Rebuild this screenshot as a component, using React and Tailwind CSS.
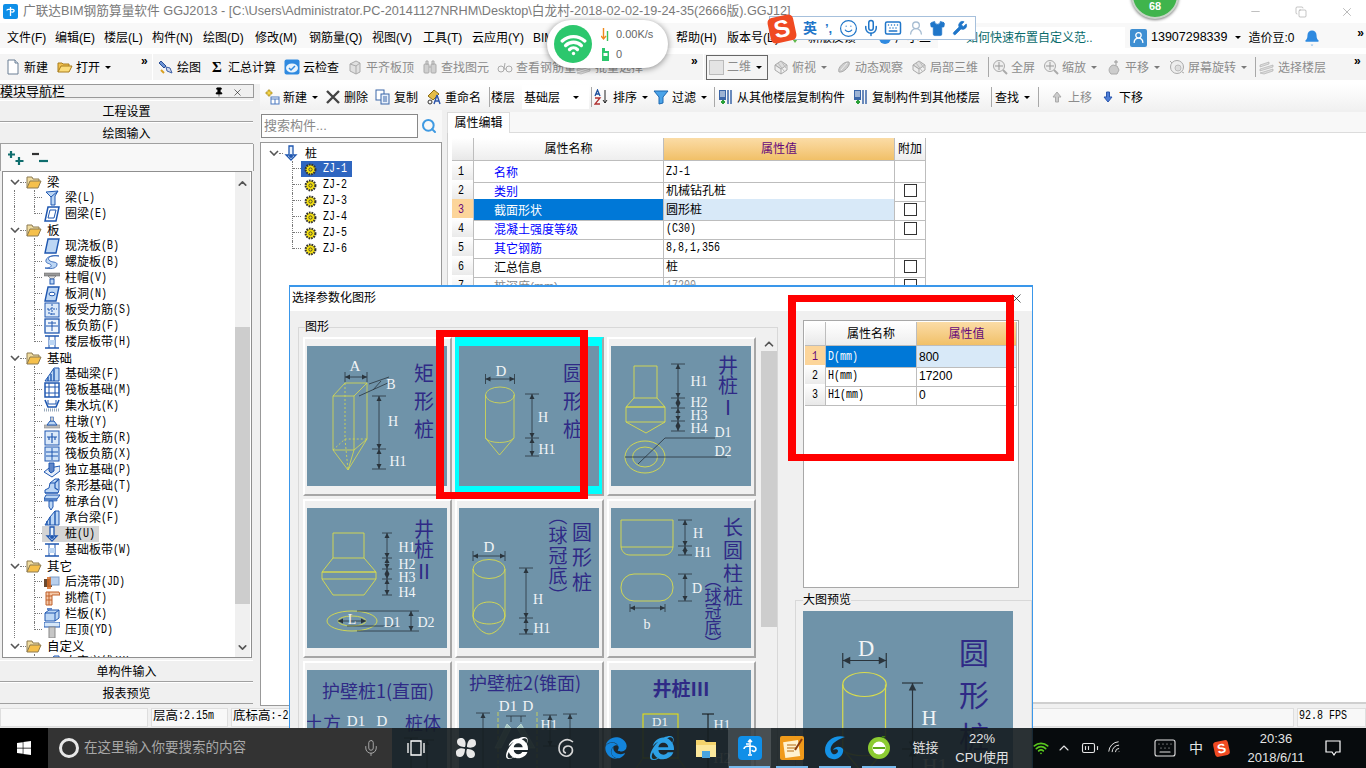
import clsx from "clsx";
import { BatteryMedium, ChevronUp, ChevronDown, Copy, Keyboard, Mic, Minus, Pin, Search, Shirt, Smile, UserRound, Wifi, Wrench, X, Bell } from "lucide-react";
import { FaEdge, FaInternetExplorer, FaWindows } from "react-icons/fa";

const MONO = "font-['Liberation_Mono','Noto_Sans_CJK_SC',monospace]";

// half-width latin next to 12px CJK, the way the app's bitmap font sets it
const Mixed = ({ text }) =>
  String(text).split(/([\x00-\x7f]+)/).map((part, i) =>
    /^[\x00-\x7f]+$/.test(part) ? (
      <span key={i} className="inline-block origin-bottom scale-y-[1.2] whitespace-pre text-[10px] leading-3">{part}</span>
    ) : (
      <span key={i}>{part}</span>
    )
  );

// ---------- small icons ----------
const Svg = ({ s = 16, children, className }) => (
  <svg width={s} height={s} viewBox="0 0 16 16" className={clsx("shrink-0", className)}>{children}</svg>
);

const Caret = () => <span className="ml-[5px] inline-block h-0 w-0 border-x-[3px] border-t-[3px] border-x-transparent border-t-black" />;

const ToolIcons = {
  page: <Svg><path d="M3 1h7l3 3v11H3z" fill="#fff" stroke="#6b7f94" /><path d="M10 1v3h3" fill="#dfe8f2" stroke="#6b7f94" /></Svg>,
  open: <Svg><path d="M1 13V4h4l1 1h6v2" fill="#f2c14e" stroke="#a87c1c" /><path d="M1 13l3-6h11l-3 6z" fill="#fbdc7a" stroke="#a87c1c" /></Svg>,
  brush: <Svg><path d="M3 2l5 5-2 2-5-5z" fill="#6a93d6" stroke="#2b4f96" /><path d="M8 8l4 1 2 5-5-2z" fill="#cfd9ee" stroke="#3b5ea6" /><path d="M3 11l3 3" stroke="#d8a020" strokeWidth="2" /></Svg>,
  sigma: <span className="w-4 text-center font-['Liberation_Serif',serif] text-[15px] font-bold leading-none">Σ</span>,
  cloud: <Svg><rect x="0.5" y="0.5" width="15" height="15" rx="2" fill="#2f8ae0" /><ellipse cx="8" cy="9" rx="6" ry="4.5" fill="#e9f4fd" /><path d="M5 9l2 2 4-4" stroke="#2f8ae0" strokeWidth="1.5" fill="none" /></Svg>,
  gBox: <Svg><path d="M3 5l6-3 4 2v9l-4 2-6-3z" fill="#e0e0e0" stroke="#aaa" /><path d="M9 7v8M3 5l6 2 4-3" stroke="#aaa" fill="none" /></Svg>,
  gBino: <Svg><rect x="2" y="5" width="5" height="9" rx="1" fill="#cfcfcf" stroke="#aaa" /><rect x="9" y="5" width="5" height="9" rx="1" fill="#cfcfcf" stroke="#aaa" /><path d="M4 2h2v3H4zM10 2h2v3h-2zM7 8h2" stroke="#aaa" fill="#ddd" /></Svg>,
  gGlass: <Svg><circle cx="4" cy="10" r="3" fill="none" stroke="#aaa" /><circle cx="12" cy="10" r="3" fill="none" stroke="#aaa" /><path d="M7 10h2M7 10l1-6" stroke="#aaa" /></Svg>,
  gOrbit: <Svg><path d="M3 13C1 9 8 2 13 3c2 3-5 11-10 10z" fill="#ccc" stroke="#aaa" /><path d="M5 11l6-7" stroke="#eee" /></Svg>,
  gCube: <Svg><path d="M2 6l6-4 6 4-6 4z" fill="#ddd" stroke="#aaa" /><path d="M2 6v5l6 4v-5zM14 6v5l-6 4" fill="#eee" stroke="#aaa" /><path d="M5 4l6 8M8 2l5 7" stroke="#bbb" /></Svg>,
  gZoom: <Svg><circle cx="7" cy="7" r="5.5" fill="#eee" stroke="#aaa" /><path d="M7 3v8M3 7h8" stroke="#999" /><path d="M11 11l4 4" stroke="#aaa" strokeWidth="2" /></Svg>,
  gPan: <Svg><path d="M5 15c-3-3-2-6 0-8l2-1 4 1 2 4-2 4z" fill="#ccc" stroke="#aaa" /><path d="M10 1v5M8 3h4" stroke="#999" /></Svg>,
  gTurn: <Svg><circle cx="8" cy="8" r="6.5" fill="#eee" stroke="#aaa" /><circle cx="9" cy="9" r="3" fill="#ddd" stroke="#bbb" /><path d="M3 4l-2-2M13 13l2 1" stroke="#aaa" /></Svg>,
  gLayers: <Svg><path d="M1 6l9-3v2l-9 3zM1 10l13-4v2L1 12zM1 14l13-4v2l-9 3z" fill="#ddd" stroke="#aaa" strokeWidth="0.6" /></Svg>,
  newItem: <Svg><path d="M4 1h2v2h2v2H6v2H4V5H2V3h2z" fill="#f6d64a" stroke="#a78a1c" strokeWidth="0.7" /><rect x="7" y="8" width="8" height="7" fill="#fff" stroke="#4a79c0" /><path d="M7 10h8M11 10v5" stroke="#4a79c0" /></Svg>,
  del: <Svg><path d="M2 2l12 12M14 2L2 14" stroke="#444" strokeWidth="2.4" /></Svg>,
  dup: <Svg><rect x="1" y="1" width="8" height="10" fill="#fff" stroke="#3b66a8" /><rect x="6" y="5" width="8" height="10" fill="#e8f0fb" stroke="#3b66a8" /><path d="M8 8h4M8 10h4M8 12h4" stroke="#3b66a8" /></Svg>,
  rename: <Svg><path d="M2 7l6-6 5 4-6 6z" fill="#e4bd48" stroke="#8a6a10" /><path d="M11 6l-3 9M11 6l3 9M9 12h4" stroke="#2c55a8" strokeWidth="1.4" fill="none" /><circle cx="4" cy="13" r="2" fill="none" stroke="#333" /></Svg>,
  sort: <Svg><path d="M1 7l2.500-6L6 7M2 5h3" stroke="#1c4f9c" strokeWidth="1.3" fill="none" /><path d="M1 9h5l-5 6h5" stroke="#b03030" strokeWidth="1.3" fill="none" /><path d="M11 1v13M9 11l2 3 2-3" stroke="#222" fill="none" /></Svg>,
  filter: <Svg><path d="M1 2h14L10 8v6l-4 1V8z" fill="#4aa3e8" stroke="#1d68b0" /></Svg>,
  copyFrom: <Svg><rect x="1" y="1" width="7" height="10" fill="#3b66a8" /><path d="M2 3h5M2 5h5M2 7h5" stroke="#fff" /><path d="M10 1v14M13 1v14" stroke="#3b66a8" strokeWidth="1.5" /><path d="M3 13h4M5 11v4" stroke="#2aa038" strokeWidth="2" /></Svg>,
  up: <Svg><path d="M8 3l4 5H9.500v5h-3V8H4z" fill="#ccc" stroke="#aaa" /></Svg>,
  down: <Svg><path d="M8 13l4-5H9.500V3h-3v5H4z" fill="#4f7fd8" stroke="#2b57ad" /></Svg>,
};

const Tool = ({ w, icon, label, gray, caret, caretGray }) => (
  <div className={clsx("flex h-full shrink-0 items-center", w, gray ? "text-[#8c8c8c]" : "text-black")}>
    <span className="flex w-[19px] shrink-0 items-center justify-start">{ToolIcons[icon]}</span>
    <span className="whitespace-nowrap pt-px">{label}</span>
    {caret && <span className={clsx("flex items-center", caretGray && "opacity-50")}><Caret /></span>}
  </div>
);

const Sep = ({ w }) => (
  <div className={clsx("flex h-full shrink-0 items-center justify-center", w)}>
    <div className="h-[20px] w-px bg-[#a8a8a8]" />
  </div>
);

const More = () => <span className="self-start pt-[1px] text-[12px] font-bold leading-none text-black">»</span>;

// ---------- tree icons ----------
const B = "#1f57b0";
const L = "#bcd6f4";
const TreeIcons = {
  beam: <Svg><path d="M2 2l12-1-3 5v9H7V7z" fill={L} stroke={B} /><path d="M7 7l7-6" stroke={B} /></Svg>,
  ring: <Svg><path d="M4 1h11l-3 14H1z" fill="#fff" stroke={B} strokeWidth="1.5" /><path d="M6 4h6l-2 8H4z" fill="none" stroke={B} /></Svg>,
  slab: <Svg><path d="M4 1h11l-3 14H1z" fill={L} stroke={B} strokeWidth="1.4" /></Svg>,
  spiral: <Svg><path d="M15 2C8 1 3 3 5 6s9 1 8 5-7 4-12 3c4 0 7-1 6-3S1 10 2 6s8-5 13-4z" fill={L} stroke={B} strokeWidth="0.8" /></Svg>,
  cap: <Svg><rect x="0" y="3" width="16" height="3" fill="#999" stroke="#666" strokeWidth="0.5" /><path d="M4 6h8L9 9H7z" fill="#ddd" stroke="#666" strokeWidth="0.6" /><rect x="6" y="9" width="4" height="5" fill={L} stroke={B} /></Svg>,
  hole: <Svg><path d="M4 1h11l-3 14H1z" fill={L} stroke={B} strokeWidth="1.4" /><ellipse cx="8" cy="8" rx="3" ry="1.8" fill="#fff" stroke={B} /></Svg>,
  force: <Svg><rect x="1" y="1" width="14" height="14" fill="#dbe9f9" stroke={B} /><path d="M8 2v12M3 7h10M5 7v5h6" fill="none" stroke={B} strokeDasharray="2 1" /></Svg>,
  neg: <Svg><rect x="1" y="1" width="14" height="14" fill="#eef5fd" stroke={B} strokeWidth="1.3" /><path d="M8 3v10M2 8h12M4 5h8" stroke={B} /></Svg>,
  band: <Svg><path d="M1 2h14M1 14h14" stroke={B} strokeWidth="1.6" /><path d="M5 2v12M11 2v12" stroke={B} /><rect x="5" y="6" width="6" height="5" fill={L} /></Svg>,
  fbeam: <Svg><path d="M1 15l5-7 4-6h5v13z" fill={L} stroke={B} /><path d="M7 15V8M10 15V3M4 15V11" stroke={B} strokeWidth="1.4" /></Svg>,
  raft: <Svg><rect x="1" y="1" width="14" height="14" fill="#fff" stroke={B} strokeWidth="1.5" /><path d="M1 5h14M1 11h14M5 1v14M11 1v14" stroke={B} /></Svg>,
  pit: <Svg><path d="M1 2l3 7h8l3-7" fill="none" stroke={B} strokeWidth="1.6" /><path d="M4 2v4h8V2" fill="none" stroke={B} /><path d="M0 12h16" stroke="#9ab" strokeWidth="3" strokeDasharray="1 1" /></Svg>,
  pier: <Svg><path d="M0 11h16v3H0z" fill="#bbb" stroke="#888" strokeWidth="0.6" /><path d="M3 11l3-4h4l3 4z" fill={L} stroke={B} /><rect x="6.500" y="3" width="3" height="4" fill="#ccc" stroke={B} strokeWidth="0.6" /></Svg>,
  rMain: <Svg><rect x="1" y="1" width="14" height="14" fill="#dbe9f9" stroke={B} /><path d="M8 3v10M3 7h10M5 7v3M11 7v3" stroke={B} strokeWidth="1.2" /></Svg>,
  rNeg: <Svg><rect x="1" y="1" width="14" height="14" fill="#cfe2f8" stroke={B} /><path d="M8 2v12M2 6h12M2 10h12" stroke={B} /></Svg>,
  indep: <Svg><path d="M0 10l5-4 11-2v5l-8 6z" fill="#e6eef9" stroke={B} /><path d="M5 1h5v8l-3 2-2-2z" fill="#5f86c8" stroke={B} /></Svg>,
  strip: <Svg><path d="M1 15v-3l4-2 1-5 5-4h4v11l-1 3z" fill={L} stroke={B} /><path d="M1 15h13M6 5h5l4-4M11 5v5l3 2" fill="none" stroke={B} strokeWidth="1.2" /></Svg>,
  pileCap: <Svg><path d="M2 1h14l-3 4H0z" fill={L} stroke={B} /><path d="M0 5h13v2H0z" fill="#6d94d0" stroke={B} strokeWidth="0.6" /><path d="M5 7h4v6l-2 3-2-3z" fill={L} stroke={B} /></Svg>,
  cBeam: <Svg><path d="M1 15l5-8 5-6h4v14z" fill={L} stroke={B} /><path d="M6 15V7M11 15V1M3 15v-4" stroke={B} strokeWidth="1.4" /></Svg>,
  pile: <Svg><path d="M6 1h4v9h3l-5 5-5-5h3z" fill="#e9f2fc" stroke={B} strokeWidth="1.3" /><circle cx="8" cy="11" r="2" fill={B} /></Svg>,
  post: <Svg><rect x="0" y="5" width="8" height="8" fill="#6a4a30" /><rect x="6" y="3" width="9" height="8" fill="#b8cfec" stroke="#7d9bc6" /><rect x="3" y="3" width="4" height="12" fill="#d86a20" opacity="0.8" /></Svg>,
  eave: <Svg><path d="M2 2h13l1 3H8v10H2z" fill="#f4c8a8" stroke="#c0602a" /><path d="M2 6h6M2 10h6M5 2v13" stroke="#c0602a" /></Svg>,
  rail: <Svg><path d="M1 7l4-3h10v8l-4 3H1z" fill={L} stroke={B} /><path d="M1 7h10v8M11 7l4-3" fill="none" stroke={B} /><rect x="3" y="2" width="5" height="2" fill="#5f86c8" /></Svg>,
  coping: <Svg><rect x="0" y="0" width="16" height="5" fill="#d5e6f8" stroke={B} /><rect x="5" y="5" width="6" height="11" fill="#c6c6c6" stroke="#888" /></Svg>,
};

const Folder = () => (
  <Svg><path d="M1 14V3h5l1 2h6v2" fill="#f0dca0" stroke="#8c7a50" /><path d="M1 14l3-7h11l-3 7z" fill="#f5c04c" stroke="#8c7a50" /></Svg>
);

const Chevron = () => (
  <svg width="10" height="6" viewBox="0 0 10 6" className="shrink-0"><path d="M1 1l4 4 4-4" fill="none" stroke="#555" strokeWidth="1.6" /></svg>
);

const navTree = [
  { name: "梁", items: [["梁(L)", "beam"], ["圈梁(E)", "ring"]] },
  { name: "板", items: [["现浇板(B)", "slab"], ["螺旋板(B)", "spiral"], ["柱帽(V)", "cap"], ["板洞(N)", "hole"], ["板受力筋(S)", "force"], ["板负筋(F)", "neg"], ["楼层板带(H)", "band"]] },
  { name: "基础", items: [["基础梁(F)", "fbeam"], ["筏板基础(M)", "raft"], ["集水坑(K)", "pit"], ["柱墩(Y)", "pier"], ["筏板主筋(R)", "rMain"], ["筏板负筋(X)", "rNeg"], ["独立基础(P)", "indep"], ["条形基础(T)", "strip"], ["桩承台(V)", "pileCap"], ["承台梁(F)", "cBeam"], ["桩(U)", "pile"], ["基础板带(W)", "band"]] },
  { name: "其它", items: [["后浇带(JD)", "post"], ["挑檐(T)", "eave"], ["栏板(K)", "rail"], ["压顶(YD)", "coping"]] },
  { name: "自定义", items: [["自定义线(X)", "fbeam"]] },
];

const Dotted = "border-dotted border-[#7a7a7a]";

const NavTree = () => (
  <div className={clsx("pt-[2px] text-[12px] leading-4 text-black", MONO)}>
    {navTree.map((g, gi) => (
      <div key={g.name}>
        <div className="flex h-4 items-center pl-[7px]">
          <Chevron />
          <div className={clsx("w-[6px] border-t", Dotted)} />
          <Folder />
          <span className="ml-[5px] font-['Noto_Sans_CJK_SC',sans-serif] text-[12.5px]">{g.name}</span>
        </div>
        {g.items.map(([label, icon], i) => {
          const last = i === g.items.length - 1;
          const active = label === "桩(U)";
          return (
            <div key={label} className="flex h-4 items-center pl-[11px]">
              <div className={clsx("h-full w-5", gi < navTree.length - 1 && "border-l", Dotted)} />
              <div className={clsx("w-[8px] self-start border-l", last ? "h-1/2" : "h-full", Dotted)}>
                <div className={clsx("h-[8px] border-b", Dotted)} />
              </div>
              <div className={clsx("flex h-full items-center pl-[2px] pr-[4px]", active && "bg-[#d4d4d4]")}>
                {TreeIcons[icon]}
                <span className="ml-[5px] whitespace-nowrap pt-px"><Mixed text={label} /></span>
              </div>
            </div>
          );
        })}
      </div>
    ))}
  </div>
);

const NavButton = ({ children }) => (
  <div className="flex h-[22px] items-center justify-center border-y border-[#a0a0a0] border-t-white bg-[#f0f0f0] pt-[2px] text-[12px] text-black">{children}</div>
);

const pileItems = ["ZJ-1", "ZJ-2", "ZJ-3", "ZJ-4", "ZJ-5", "ZJ-6"];

const Gear = () => (
  <Svg s={13}><circle cx="8" cy="8" r="6" fill="#f5e010" stroke="#333" strokeWidth="2.6" strokeDasharray="2 1.2" /><circle cx="8" cy="8" r="2" fill="#f5e010" stroke="#333" /></Svg>
);

const PileTree = () => (
  <div className={clsx("pl-[8px] pt-[2px] text-[12px] text-black", MONO)}>
    <div className="flex h-4 items-center">
      <Chevron />
      <div className={clsx("w-[4px] border-t", Dotted)} />
      {TreeIcons.pile}
      <span className="ml-[6px] font-['Noto_Sans_CJK_SC',sans-serif]">桩</span>
    </div>
    {pileItems.map((name, i) => (
      <div key={name} className="flex h-4 items-center pl-[23px]">
        <div className={clsx("w-[9px] self-start border-l", i === 5 ? "h-1/2" : "h-full", Dotted)}>
          <div className={clsx("h-[8px] border-b", Dotted)} />
        </div>
        <div className={clsx("flex h-full w-[51px] items-center pl-[3px]", i === 0 && "bg-[#2f66c0] text-white")}>
          <Gear />
          <span className="ml-[6px] pt-px"><Mixed text={name} /></span>
        </div>
      </div>
    ))}
  </div>
);

// ---------- property grids ----------
const rowNum = "bg-gradient-to-b from-white to-[#e8e8e8]";

const Check = () => <div className="mx-auto h-[13px] w-[13px] border border-[#333] bg-white" />;

const propRows = [
  { n: 1, name: "名称", value: "ZJ-1", link: true },
  { n: 2, name: "类别", value: "机械钻孔桩", link: true, check: true },
  { n: 3, name: "截面形状", value: "圆形桩", link: true, check: true, selected: true },
  { n: 4, name: "混凝土强度等级", value: "(C30)", link: true, check: true },
  { n: 5, name: "其它钢筋", value: "8,8,1,356", link: true },
  { n: 6, name: "汇总信息", value: "桩", check: true },
  { n: 7, name: "桩深度(mm)", value: "17200", check: true, faded: true },
];

const cell = "flex items-center border-b border-r border-[#bdbdbd]";

const PropGrid = () => (
  <div className="ml-[4px] mt-[5px] w-[474px] text-[12px]">
    <div className="grid h-[23px] grid-cols-[22px_190px_231px_31px] text-[12px]">
      <div className={clsx(cell, rowNum)} />
      <div className={clsx(cell, "justify-center bg-gradient-to-b from-white to-[#eeeeee]")}>属性名称</div>
      <div className={clsx(cell, "justify-center bg-gradient-to-b from-[#fbdca6] to-[#f1c067] text-[#66097a]")}>属性值</div>
      <div className={clsx(cell, "justify-center bg-gradient-to-b from-white to-[#eeeeee]")}>附加</div>
    </div>
    {propRows.map((r) => (
      <div key={r.n} className="grid h-[19px] grid-cols-[22px_190px_231px_31px]">
        <div className={clsx(cell, "justify-center pr-[3px] pt-[3px]", MONO, r.selected ? "bg-[#fcd59a] text-[#66097a]" : rowNum)}><span><Mixed text={r.n} /></span></div>
        <div className={clsx(cell, "pl-[20px] pt-[2px]", r.selected ? "bg-[#0078d7] text-white" : r.link ? "text-[#0000ff]" : r.faded ? "text-[#888]" : "text-black")}>{r.name}</div>
        <div className={clsx(cell, "pl-[2px] pt-[2px]", MONO, r.selected && "bg-[#d8e9f8]", r.faded ? "text-[#888]" : "text-black")}><span><Mixed text={r.value} /></span></div>
        <div className={cell}>{r.check && <Check />}</div>
      </div>
    ))}
  </div>
);

const paramRows = [
  { n: 1, name: "D(mm)", value: "800", selected: true },
  { n: 2, name: "H(mm)", value: "17200" },
  { n: 3, name: "H1(mm)", value: "0" },
];

const ParamGrid = () => (
  <div className="ml-[8px] h-[268px] w-[216px] border border-[#a8a8a8] bg-white p-[1px] text-[12px]">
    <div className="grid h-[24px] grid-cols-[21px_91px_100px]">
      <div className={clsx(cell, rowNum)} />
      <div className={clsx(cell, "justify-center bg-gradient-to-b from-white to-[#eeeeee]")}>属性名称</div>
      <div className={clsx(cell, "justify-center bg-gradient-to-b from-[#fbdca6] to-[#f1c067] text-[#66097a]")}>属性值</div>
    </div>
    {paramRows.map((r) => (
      <div key={r.n} className="grid h-[19px] grid-cols-[21px_91px_100px]">
        <div className={clsx(cell, "justify-center pt-[3px]", MONO, r.selected ? "bg-[#fcd59a] text-[#66097a]" : rowNum)}><span><Mixed text={r.n} /></span></div>
        <div className={clsx(cell, "pl-[2px] pt-[2px]", MONO, r.selected ? "bg-[#0078d7] text-white" : "text-black")}><span><Mixed text={r.name} /></span></div>
        <div className={clsx(cell, "pl-[2px]", r.selected && "bg-[#d8e9f8]", "font-['Liberation_Sans',sans-serif] text-black")}>{r.value}</div>
      </div>
    ))}
  </div>
);

// ---------- pile drawings ----------
const YL = "#d9dc4c";
const DK = "#2a343c";
const INK = "#2f2a86";

const Lbl = ({ x, y, s = 14, children }) => (
  <text x={x} y={y} fontSize={s} textAnchor="middle" fill="#f1f4f6" fontFamily="Liberation Serif, serif">{children}</text>
);

const Ink = ({ x, y, s = 20, step = 28, chars, fw }) => (
  <>
    {[...chars].map((c, i) => (
      <text key={i} x={x} y={y + i * step} fontSize={s} textAnchor="middle" fill={INK} fontWeight={fw} fontFamily="Noto Sans CJK SC, Liberation Serif, sans-serif">{c}</text>
    ))}
  </>
);

const VDim = ({ x, ys, t = 7 }) => (
  <g stroke={DK} fill={DK}>
    <line x1={x} x2={x} y1={ys[0]} y2={ys[ys.length - 1]} strokeWidth="0.8" />
    {ys.map((y) => <line key={y} x1={x - t} x2={x + t} y1={y} y2={y} strokeWidth="0.8" />)}
    {ys.slice(0, -1).map((y, i) => (
      <g key={y} stroke="none">
        <path d={`M${x} ${y}l-2.5 5h5z`} />
        <path d={`M${x} ${ys[i + 1]}l-2.5 -5h5z`} />
      </g>
    ))}
  </g>
);

const HDim = ({ y, x1, x2, t = 5 }) => (
  <g stroke={DK} fill={DK}>
    <line x1={x1} x2={x2} y1={y} y2={y} strokeWidth="0.8" />
    <line x1={x1} x2={x1} y1={y - t} y2={y + t} strokeWidth="0.8" />
    <line x1={x2} x2={x2} y1={y - t} y2={y + t} strokeWidth="0.8" />
    <path d={`M${x1} ${y}l5 -2.5v5z`} stroke="none" />
    <path d={`M${x2} ${y}l-5 -2.5v5z`} stroke="none" />
  </g>
);

const Pic = ({ size = 140, children }) => (
  <svg width={size} height={size} viewBox="0 0 140 140" className="block shrink-0 bg-[#6f93a9]">{children}</svg>
);

const RectPile = () => (
  <Pic>
    <g fill="none" stroke={YL} strokeWidth="0.8">
      <path d="M26 50h21v54H26zM26 50l12-13h22L47 50M60 37v56l-13 11M26 104l15 20 6-20M41 124l19-31" />
      <path d="M38 37v56l3 31M26 104l12-11h22" strokeDasharray="2 2" />
    </g>
    <Lbl x={48} y={25} s={15}>A</Lbl>
    <HDim y={31} x1={38} x2={60} />
    <path d="M52 50l31-14M62 38l20-7" stroke={DK} strokeWidth="0.8" />
    <path d="M66 44l8-9" stroke={DK} strokeWidth="0.8" />
    <Lbl x={84} y={43}>B</Lbl>
    <VDim x={72} ys={[50, 103, 123]} />
    <Lbl x={86} y={80}>H</Lbl>
    <Lbl x={91} y={120}>H1</Lbl>
    <Ink x={117} y={35} chars="矩形桩" />
  </Pic>
);

const RoundPile = ({ size }) => (
  <Pic size={size}>
    <g fill="none" stroke={YL} strokeWidth="0.8">
      <ellipse cx="41" cy="49" rx="14.500" ry="8" />
      <path d="M26.500 49v43l14 17 14.500-17V49M26.500 92c3 6 25 6 28 0" />
    </g>
    <Lbl x={42} y={30} s={15}>D</Lbl>
    <HDim y={33} x1={26.500} x2={55.500} />
    <VDim x={73} ys={[48, 92, 110]} />
    <Lbl x={84} y={76}>H</Lbl>
    <Lbl x={88} y={108}>H1</Lbl>
    <Ink x={114} y={35} chars="圆形桩" />
  </Pic>
);

const WellPile1 = () => (
  <Pic>
    <g fill="none" stroke={YL} strokeWidth="0.9">
      <path d="M23 20h23v32H23zM23 52l-8 9h39l-8-9M15 61h39v15H15zM15 76l20 11 19-11" />
      <ellipse cx="34" cy="111" rx="20" ry="16" />
      <ellipse cx="34" cy="111" rx="12.500" ry="10" />
    </g>
    <VDim x={67} ys={[18, 52, 62, 75, 85]} />
    <Lbl x={88} y={40}>H1</Lbl>
    <Lbl x={88} y={61}>H2</Lbl>
    <Lbl x={88} y={74}>H3</Lbl>
    <Lbl x={88} y={87}>H4</Lbl>
    <path d="M27 118l27-26h50M14 111h102" stroke={DK} strokeWidth="0.8" fill="none" />
    <Lbl x={112} y={91}>D1</Lbl>
    <Lbl x={112} y={110}>D2</Lbl>
    <Ink x={117} y={27} chars="井桩" step={20} />
    <Ink x={117} y={69} chars="Ⅰ" />
  </Pic>
);

const WellPile2 = () => (
  <Pic>
    <g fill="none" stroke={YL} strokeWidth="0.9">
      <path d="M26 25h31v25H26zM26 50L15 64h54L57 50M15 64h54v7H15zM15 71l11 16h31l12-16" />
      <ellipse cx="45" cy="113" rx="25" ry="10" />
      <ellipse cx="45" cy="113" rx="14" ry="5" />
    </g>
    <VDim x={80} ys={[25, 50, 61, 71, 87]} t={5} />
    <Lbl x={100} y={44}>H1</Lbl>
    <Lbl x={100} y={61}>H2</Lbl>
    <Lbl x={100} y={74}>H3</Lbl>
    <Lbl x={100} y={89}>H4</Lbl>
    <path d="M50 103h62M50 123h62M40 118h50" stroke={DK} strokeWidth="0.8" fill="none" />
    <VDim x={104} ys={[103, 123]} t={0} />
    <HDim y={113} x1={31} x2={59} t={0} />
    <Lbl x={45} y={116}>L</Lbl>
    <Lbl x={85} y={119}>D1</Lbl>
    <Lbl x={119} y={119}>D2</Lbl>
    <Ink x={117} y={29} chars="井桩" step={20} />
    <Ink x={117} y={71} chars="Ⅱ" />
  </Pic>
);

const DomePile = () => (
  <Pic>
    <g fill="none" stroke={YL} strokeWidth="0.9">
      <ellipse cx="30" cy="61" rx="16" ry="9.500" />
      <path d="M14 61v47c0 9 10 18 16 18s16-9 16-18V61" />
      <path d="M14 108c1-11 9-14 16-14s15 3 16 14c-1 6-10 8-16 8s-15-2-16-8z" />
    </g>
    <Lbl x={30} y={44} s={15}>D</Lbl>
    <HDim y={48} x1={14} x2={46} />
    <VDim x={67} ys={[60, 110, 126]} />
    <Lbl x={79} y={96}>H</Lbl>
    <Lbl x={83} y={125}>H1</Lbl>
    <Ink x={123} y={32} chars="圆形桩" step={25} />
    <Ink x={99} y={15} chars="︵球冠底︶" step={20} s={19} />
  </Pic>
);

const LongPile = () => (
  <Pic>
    <g fill="none" stroke={YL} strokeWidth="0.9">
      <path d="M10 12h52v27H10zM10 39c1 5 4 8 9 8h34c5 0 8-3 9-8" />
      <rect x="10" y="66" width="52" height="27" rx="13" />
    </g>
    <VDim x={74} ys={[12, 38, 47]} />
    <Lbl x={87} y={30}>H</Lbl>
    <Lbl x={92} y={49}>H1</Lbl>
    <VDim x={74} ys={[66, 93]} />
    <Lbl x={86} y={85}>D</Lbl>
    <HDim y={100} x1={19} x2={54} t={4} />
    <Lbl x={36} y={121}>b</Lbl>
    <Ink x={122} y={27} chars="长圆柱桩" step={23} />
    <Ink x={102} y={78} chars="︵球冠底︶" step={16} s={17} />
  </Pic>
);

const GuardPile1 = () => (
  <Pic>
    <text x={71} y={28} fontSize="18" textAnchor="middle" fill={INK} fontFamily="Noto Sans CJK SC, sans-serif">护壁桩1(直面)</text>
    <text x={16} y={60} fontSize="18" textAnchor="middle" fill={INK} fontFamily="Noto Sans CJK SC, sans-serif">土方</text>
    <text x={116} y={60} fontSize="18" textAnchor="middle" fill={INK} fontFamily="Noto Sans CJK SC, sans-serif">桩体</text>
    <Lbl x={49} y={56} s={15}>D1</Lbl>
    <Lbl x={75} y={56} s={15}>D</Lbl>
    <VDim x={18} ys={[68, 135]} />
    <VDim x={104} ys={[68, 110, 135]} />
    <VDim x={120} ys={[70, 135]} />
    <Lbl x={57} y={100} s={15}>A</Lbl>
    <Lbl x={86} y={118} s={15}>H1</Lbl>
  </Pic>
);

const GuardPile2 = () => (
  <Pic>
    <text x={66} y={20} fontSize="18" textAnchor="middle" fill={INK} fontFamily="Noto Sans CJK SC, sans-serif">护壁桩2(锥面)</text>
    <Lbl x={49} y={41} s={15}>D1</Lbl>
    <Lbl x={69} y={41} s={15}>D</Lbl>
    <path d="M47 46h20M52 46v6M62 46v6" stroke={DK} fill="none" strokeWidth="0.8" />
    <path d="M39 42v98M78 42v98" stroke={YL} strokeWidth="0.8" strokeDasharray="4 2" />
    <path d="M48 54l-12 24h6l10-20zM62 54l14 24h-6l-12-20z" fill="#a6c8c4" stroke="#cfe6dc" strokeWidth="0.7" />
    <VDim x={24} ys={[43, 135]} />
    <VDim x={91} ys={[45, 76]} />
    <VDim x={111} ys={[44, 135]} />
    <Lbl x={90} y={60}>H1</Lbl>
  </Pic>
);

const WellPile3 = () => (
  <Pic>
    <text x={70} y={26} fontSize="19" fontWeight="700" textAnchor="middle" fill={INK} fontFamily="Noto Sans CJK SC, sans-serif">井桩Ⅲ</text>
    <rect x={32} y={44} width={35} height={44} fill="none" stroke="#f2e600" strokeWidth="1" />
    <path d="M32 88L12 118h76L67 88" fill="none" stroke="#c7c830" strokeWidth="0.8" />
    <path d="M91 44h12M97 44v96" stroke="#111" strokeWidth="1" />
    <Lbl x={111} y={60}>H1</Lbl>
    <Lbl x={111} y={93}>H2</Lbl>
    <Lbl x={111} y={125}>H1</Lbl>
    <Lbl x={49} y={56} s={13}>D1</Lbl>
    <Lbl x={49} y={128} s={13}>D2</Lbl>
  </Pic>
);

const tiles = [RectPile, RoundPile, WellPile1, WellPile2, DomePile, LongPile, GuardPile1, GuardPile2, WellPile3];

const Tile = ({ Drawing, selected }) => (
  <div className={clsx("h-[159px] w-[149px] border-2 border-b-[#a6a6a6] border-r-[#a6a6a6] pl-[2px] pt-[7px]", selected ? "border-l-[#00ffff] border-t-[#00ffff] bg-[#00ffff]" : "border-l-white border-t-white bg-[#f0f0f0]")}>
    <Drawing />
  </div>
);

const RedBox = ({ className }) => <div className={clsx("pointer-events-none absolute border-y-[7px] border-x-8 border-[#ff0000]", className)} />;

const ParamDialog = () => (
  <div className="absolute left-[289px] top-[285px] z-10 h-[560px] w-[744px] border-x border-t-2 border-[#3a97ea] bg-[#f0f0f0] text-[12px]">
    <div className="flex h-[24px] items-center justify-between bg-white pb-[2px] pl-[2px] pr-[8px]">
      <span>选择参数化图形</span>
      <X size={15} strokeWidth={1.2} className="text-[#222]" />
    </div>
    <div className="flex pl-[8px] pt-[8px]">
      <fieldset className="h-[600px] w-[480px] shrink-0 border border-[#d8d8d8] pl-[4px] pt-[2px]">
        <legend className="ml-[2px] leading-4">图形</legend>
        <div className="flex items-start">
          <div className="grid w-[453px] shrink-0 grid-cols-[149px_149px_149px] content-start gap-[3px]">
            {tiles.map((D, i) => <Tile key={i} Drawing={D} selected={i === 1} />)}
          </div>
          <div className="ml-[5px] flex h-[500px] w-[16px] shrink-0 flex-col bg-[#f0f0f0]">
            <ChevronUp size={14} strokeWidth={3} className="mx-auto shrink-0 text-[#555]" />
            <div className="h-[276px] bg-[#cdcdcd]" />
          </div>
        </div>
      </fieldset>
      <div className="ml-[17px] w-[237px] shrink-0">
        <div className="pt-[1px]"><ParamGrid /></div>
        <fieldset className="mt-[4px] h-[300px] border border-[#d8d8d8] pl-[7px] pt-[3px]">
          <legend className="leading-4">大图预览</legend>
          <RoundPile size={210} />
        </fieldset>
      </div>
    </div>
  </div>
);

// ---------- taskbar ----------
const SogouS = ({ size }) => (
  <div className={clsx("flex shrink-0 -rotate-12 items-center justify-center bg-[#f04a22] font-['Liberation_Sans',sans-serif] font-bold leading-none text-white", size)}>S</div>
);

const TaskCell = ({ w, active, bar, children }) => (
  <div className={clsx("relative flex h-full shrink-0 items-center justify-center", w, active && "bg-white/15")}>
    {children}
    {bar && <div className={clsx("absolute bottom-0 h-[2px] bg-[#76b9ed]", bar)} />}
  </div>
);

const Taskbar = () => (
  <div className="relative z-20 flex h-10 shrink-0 text-[#e4e4e4]">
    <div className="flex w-12 shrink-0 items-center justify-center bg-black"><FaWindows size={16} className="text-white" /></div>
    <div className="flex w-[344px] shrink-0 items-center bg-[#333333] pl-[11px] text-[14px] text-[#a8a8a8]">
      <div className="h-[20px] w-[20px] rounded-full border-[3px] border-[#e8e8e8]" />
      <span className="ml-[5px] w-[278px] text-[13.5px]">在这里输入你要搜索的内容</span>
      <Mic size={18} strokeWidth={1.3} className="text-[#a8a8a8]" />
    </div>
    <div className="flex w-[641px] shrink-0 bg-[#141c1f]/90">
      <TaskCell w="w-[48px]">
        <svg width="20" height="18" viewBox="0 0 20 18"><path d="M5 2h10v14H5zM2 4v10M18 4v10" fill="none" stroke="#fff" strokeWidth="1.3" /></svg>
      </TaskCell>
      <TaskCell w="w-[51px]">
        <svg width="22" height="22" viewBox="0 0 22 22" fill="#e8e8e8"><path d="M10 10C7 10 2 9 2 5s3-4 5-4 5 4 3 9zM12 10c0-3 1-8 5-8s4 3 4 5-4 5-9 3zM12 12c3 0 8 1 8 5s-3 4-5 4-5-4-3-9zM10 12c0 3-1 8-5 8s-4-3-4-5 4-5 9-3z" /></svg>
      </TaskCell>
      <TaskCell w="w-[51px]"><FaInternetExplorer size={22} className="text-white" /></TaskCell>
      <TaskCell w="w-[50px]">
        <svg width="20" height="22" viewBox="0 0 20 22" fill="none" stroke="#d8d8d8" strokeWidth="1.6"><path d="M16 5C10 0 2 4 2 11s7 10 11 7 3-9-2-9-6 6-2 7" /></svg>
      </TaskCell>
      <TaskCell w="w-[48px]"><FaEdge size={22} className="text-[#1384db]" /></TaskCell>
      <TaskCell w="w-[43px]"><FaInternetExplorer size={24} className="text-[#2da1e6]" /></TaskCell>
      <TaskCell w="w-[45px]">
        <svg width="22" height="22" viewBox="0 0 22 22"><path d="M1 3h8l2 2h10v15H1z" fill="#f3d36c" /><rect x="1" y="8" width="20" height="12" fill="#fbe79b" /><rect x="7" y="14" width="8" height="7" fill="#4aa5e0" /></svg>
      </TaskCell>
      <TaskCell w="w-[43px]" active bar="inset-x-[1px]">
        <svg width="24" height="24" viewBox="0 0 24 24"><rect width="24" height="24" rx="4" fill="#0f8fe8" /><path d="M12 4v14M8 8h3M6 13c0-3 3-3 6-3s6 0 6 3-3 3-4 1M10 6l2-2 2 2M10 19h4" fill="none" stroke="#fff" strokeWidth="1.6" /></svg>
      </TaskCell>
      <TaskCell w="w-[42px]" bar="inset-x-[5px]">
        <svg width="24" height="24" viewBox="0 0 24 24"><rect width="24" height="24" rx="2" fill="#f09a1a" /><rect x="4" y="5" width="15" height="16" fill="#fff2cf" transform="rotate(-8 12 12)" /><path d="M7 9h9M7 12h9M7 15h7" stroke="#b56a10" /><path d="M15 14L22 3" stroke="#8a3d10" strokeWidth="2" /></svg>
      </TaskCell>
      <TaskCell w="w-[44px]" bar="inset-x-[6px]">
        <svg width="24" height="26" viewBox="0 0 24 26"><path d="M22 2C12-1 2 6 2 15c0 7 6 10 11 9s8-6 7-10c-3-4-9-2-10 1 2-1 5-1 5 1s-3 4-5 3-3-4-2-7c2-5 8-8 14-10z" fill="#1592e6" /></svg>
      </TaskCell>
      <TaskCell w="w-[44px]" bar="inset-x-[5px]">
        <svg width="24" height="24" viewBox="0 0 24 24"><circle cx="12" cy="12" r="11" fill="#8ccc32" /><circle cx="12" cy="12" r="6.500" fill="#fff" /><path d="M6 12h12" stroke="#5da818" strokeWidth="2" /><path d="M15 1l3-1" stroke="#3d7c10" strokeWidth="2" /></svg>
      </TaskCell>
      <TaskCell w="w-[49px]"><span className="text-[13px]">链接</span></TaskCell>
      <TaskCell w="w-[64px]">
        <div className="flex flex-col items-center text-[13px] leading-[19px]"><span>22%</span><span>CPU使用</span></div>
      </TaskCell>
    </div>
    <div className="flex flex-1 bg-[#070b0d]">
      <TaskCell w="w-[16px]"><Wifi size={18} strokeWidth={2.6} className="text-[#58c81e]" /></TaskCell>
      <TaskCell w="w-[29px]"><ChevronUp size={16} strokeWidth={1.6} /></TaskCell>
      <TaskCell w="w-[24px]"><BatteryMedium size={18} strokeWidth={1.5} /></TaskCell>
      <TaskCell w="w-[26px]"><Wifi size={16} strokeWidth={1.4} className="-rotate-45" /></TaskCell>
      <div className="w-[17px] shrink-0" />
      <TaskCell w="w-[40px]"><Keyboard size={24} strokeWidth={1.1} /></TaskCell>
      <TaskCell w="w-[22px]"><span className="text-[14px]">中</span></TaskCell>
      <TaskCell w="w-[28px]"><SogouS size="h-[15px] w-[15px] text-[13px] rounded-[3px]" /></TaskCell>
      <TaskCell w="w-[82px]">
        <div className="flex flex-col items-center text-[13px] leading-[19px]"><span>20:36</span><span>2018/6/11</span></div>
      </TaskCell>
      <TaskCell w="w-[31px]">
        <svg width="16" height="17" viewBox="0 0 16 17" fill="none" stroke="#fff" strokeWidth="1.2"><path d="M1 1h14v11h-4l-2 3-2-3H1z" /></svg>
      </TaskCell>
    </div>
  </div>
);

// ---------- floating widgets ----------
const SogouBar = () => (
  <div className="absolute left-[769px] top-[16px] z-20 flex h-[24px] w-[207px] items-center border border-[#a6c0dc] bg-white text-[#1f76c9]">
    <SogouS size="h-[26px] w-[26px] rounded-[5px] text-[24px] -ml-[1px] mt-[2px]" />
    <span className="ml-[8px] text-[14px] font-bold">英</span>
    <span className="ml-[8px] w-[10px] text-[13px] font-bold leading-none">’,</span>
    <Smile size={19} strokeWidth={1.5} className="ml-[4px]" />
    <Mic size={18} strokeWidth={2} className="ml-[4px]" />
    <Keyboard size={18} strokeWidth={2} className="ml-[4px]" />
    <UserRound size={16} strokeWidth={2} className="ml-[6px] text-[#a7bdd2]" />
    <Shirt size={17} strokeWidth={1} fill="#1f76c9" className="ml-[5px]" />
    <Wrench size={16} strokeWidth={1} fill="#1f76c9" className="ml-[6px]" />
  </div>
);

const NetWidget = () => (
  <div className="absolute left-[547px] top-[20px] z-20 flex h-[48px] w-[121px] items-center rounded-full bg-white pl-[7px] shadow-[0_1px_6px_rgba(0,0,0,0.45)]">
    <div className="flex h-[38px] w-[38px] shrink-0 items-center justify-center rounded-full bg-[#2cc76d]">
      <Wifi size={27} strokeWidth={3} className="text-white" />
    </div>
    <div className="ml-[9px] flex flex-col gap-[5px] text-[11px] leading-[15px] text-[#666]">
      <div className="flex items-center gap-[6px]">
        <svg width="9" height="13" viewBox="0 0 9 13"><path d="M2.500 0v10M0 8l2.500 3L5 8" stroke="#f08a1c" fill="none" strokeWidth="1.4" /><path d="M6.500 13V3" stroke="#3cc15a" strokeWidth="1.4" /></svg>
        <span>0.00K/s</span>
      </div>
      <div className="flex items-center gap-[6px]">
        <svg width="9" height="13" viewBox="0 0 9 13"><rect x="1" y="3" width="7" height="10" fill="#2cc76d" /><rect x="1" y="0" width="3" height="3" fill="#2cc76d" /><rect x="2.500" y="5" width="4" height="3" fill="#fff" /></svg>
        <span>0</span>
      </div>
    </div>
  </div>
);

const ScoreBubble = () => (
  <div className="absolute left-[1131px] top-[-29px] z-20 flex h-[48px] w-[48px] items-end justify-center rounded-full border-2 border-[#c8d4c8] bg-[#40b44c] pb-[4px] text-[11px] font-bold leading-[14px] text-white shadow-[0_1px_3px_rgba(0,0,0,0.5)]">68</div>
);

// ---------- page ----------
const menus = [
  ["文件(F)", "w-[48px]"], ["编辑(E)", "w-[49px]"], ["楼层(L)", "w-[48px]"], ["构件(N)", "w-[51px]"], ["绘图(D)", "w-[52px]"],
  ["修改(M)", "w-[54px]"], ["钢筋量(Q)", "w-[63px]"], ["视图(V)", "w-[51px]"], ["工具(T)", "w-[49px]"], ["云应用(Y)", "w-[61px]"],
  ["BIM应用(I)", "w-[143px]"], ["帮助(H)", "w-[51px]"], ["版本号(B)", "w-[61px]"],
];

export default function App() {
  return (
    <div className="relative flex h-[768px] w-[1366px] flex-col overflow-hidden bg-[#f0f0f0] font-['Liberation_Sans','Noto_Sans_CJK_SC',sans-serif] text-[12px] text-black">
      {/* title bar */}
      <div className="flex h-[23px] shrink-0 items-center bg-white pl-[3px] text-[#7a7a7a]">
        <div className="flex h-[15px] w-[15px] shrink-0 items-center justify-center rounded-[2px] bg-[#0f8fe8]">
          <svg width="11" height="11" viewBox="0 0 12 12" fill="none" stroke="#fff" strokeWidth="1.4"><path d="M6 1v10M2 5c0-2 8-2 8 0s-3 2-3 1" /></svg>
        </div>
        <span className="ml-[5px] w-[780px] shrink-0 overflow-hidden whitespace-nowrap text-[12.7px]">广联达BIM钢筋算量软件 GGJ2013 - [C:\Users\Administrator.PC-20141127NRHM\Desktop\白龙村-2018-02-02-19-24-35(2666版).GGJ12]</span>
        <div className="ml-auto flex w-[117px] shrink-0 items-center text-[#8a8a8a]">
          <Minus size={13} strokeWidth={1} />
          <Copy size={12} strokeWidth={1} className="ml-[33px]" />
          <X size={14} strokeWidth={1} className="ml-[33px]" />
        </div>
      </div>

      {/* menu bar */}
      <div className="flex h-[25px] shrink-0 items-center bg-[#f8f8f8] pl-[7px] pt-[4px]">
        {menus.map(([label, w]) => <div key={label} className={clsx("shrink-0", w)}>{label}</div>)}
        <div className="flex w-[90px] shrink-0 items-center">
          <svg width="14" height="14" viewBox="0 0 14 14"><path d="M2 5l5 7 5-7-3-3H5z" fill="#5db84a" /></svg>
          <span className="ml-[6px]">新版反馈</span>
        </div>
        <div className="flex w-[60px] shrink-0 items-center">
          <svg width="14" height="14" viewBox="0 0 14 14"><circle cx="7" cy="7" r="6" fill="#2f8ae0" /></svg>
          <span className="ml-[3px]">广小二</span>
        </div>
        <div className="flex h-full w-[187px] shrink-0 items-center bg-white pl-[28px] text-[#0a6b6b]">如何快速布置自定义范..</div>
        <div className="flex h-full flex-1 items-center pl-[5px]">
          <span className="flex h-[18px] w-[17px] items-center justify-center rounded-[2px] bg-[#3f8fd2]"><UserRound size={13} className="text-white" strokeWidth={2.4} /></span>
          <span className="ml-[4px] text-[12.500px]">13907298339</span>
          <span className="ml-[3px] flex items-center"><Caret /></span>
          <span className="ml-[7px]">造价豆:0</span>
          <Bell size={18} fill="#2f8ae0" strokeWidth={0} className="ml-[8px]" />
          <span className="ml-auto mr-[2px] self-start text-[12px] font-bold leading-none">»</span>
        </div>
      </div>

      {/* main toolbar */}
      <div className="flex h-[36px] shrink-0 items-start gap-px bg-white pt-[6px]">
        <div className="flex h-[26px] w-[152px] shrink-0 items-center bg-[#f4f4f4] pl-[5px] pr-[3px]">
          <Tool w="w-[52px]" icon="page" label="新建" />
          <Tool w="w-[84px]" icon="open" label="打开" caret />
          <More />
        </div>
        <div className="flex h-[26px] w-[550px] shrink-0 items-center bg-[#f4f4f4] pl-[5px]">
          <Tool w="w-[51px]" icon="brush" label="绘图" />
          <Tool w="w-[75px]" icon="sigma" label="汇总计算" />
          <Tool w="w-[63px]" icon="cloud" label="云检查" />
          <Tool w="w-[75px]" icon="gBox" label="平齐板顶" gray />
          <Tool w="w-[75px]" icon="gBino" label="查找图元" gray />
          <Tool w="w-[79px]" icon="gGlass" label="查看钢筋量" gray />
          <Tool w="w-[115px]" icon="gLayers" label="批量选择" gray />
          <More />
        </div>
        <div className="flex h-[26px] flex-1 items-center bg-[#f4f4f4] pl-[2px]">
          <div className="flex h-[25px] w-[62px] shrink-0 items-center whitespace-nowrap border border-[#666] pl-[2px] text-[#8c8c8c]">
            <span className="h-[15px] w-[15px] shrink-0 border border-[#bbb] bg-[#e4e4e4]" />
            <span className="ml-[3px]">二维</span>
            <span className="flex items-center"><Caret /></span>
          </div>
          <div className="w-[5px] shrink-0" />
          <Tool w="w-[63px]" icon="gCube" label="俯视" gray caret caretGray />
          <Tool w="w-[75px]" icon="gOrbit" label="动态观察" gray />
          <Tool w="w-[74px]" icon="gCube" label="局部三维" gray />
          <Sep w="w-[7px]" />
          <Tool w="w-[51px]" icon="gZoom" label="全屏" gray />
          <Tool w="w-[63px]" icon="gZoom" label="缩放" gray caret caretGray />
          <Tool w="w-[63px]" icon="gPan" label="平移" gray caret caretGray />
          <Tool w="w-[82px]" icon="gTurn" label="屏幕旋转" gray caret caretGray />
          <Sep w="w-[8px]" />
          <Tool w="w-[95px]" icon="gLayers" label="选择楼层" gray />
          <More />
        </div>
      </div>

      {/* work area */}
      <div className="flex h-[624px] shrink-0">
        {/* module nav */}
        <div className="flex w-[254px] shrink-0 flex-col">
          <div className="flex h-[14px] shrink-0 items-center justify-between border-y border-r border-[#999] pr-[10px] pt-[2px] text-[13px]">
            <span>模块导航栏</span>
            <span className="flex items-center gap-[8px]">
              <Pin size={10} fill="#000" strokeWidth={1.5} />
              <X size={11} strokeWidth={1.2} />
            </span>
          </div>
          <div className="mt-[2px] flex flex-col pr-[1px]">
            <NavButton>工程设置</NavButton>
            <NavButton>绘图输入</NavButton>
          </div>
          <div className="flex h-[27px] shrink-0 items-center gap-[7px] border-x border-[#a0a0a0] bg-[#f8f8f8] pl-[6px]">
            <svg width="17" height="16" viewBox="0 0 17 16"><path d="M4 1v7M1 4.500h7M12 7v8M8.500 11h8" stroke="#0f6d6d" strokeWidth="2.2" /></svg>
            <svg width="17" height="16" viewBox="0 0 17 16"><path d="M1 4h7" stroke="#333" strokeWidth="2.2" /><path d="M8 11h9" stroke="#0f6d6d" strokeWidth="2.2" /></svg>
          </div>
          <div className="mx-[2px] flex h-[487px] shrink-0 border border-[#8f8f8f] bg-white">
            <div className="w-[231px] shrink-0 overflow-hidden"><NavTree /></div>
            <div className="ml-[1px] flex w-[15px] shrink-0 flex-col bg-[#f0f0f0]">
              <ChevronUp size={13} strokeWidth={3} className="mx-auto mt-[5px] shrink-0 text-[#555]" />
              <div className="mt-[137px] h-[277px] bg-[#cdcdcd]" />
              <ChevronDown size={13} strokeWidth={3} className="mx-auto mb-[3px] mt-auto shrink-0 text-[#555]" />
            </div>
          </div>
          <div className="mt-[2px] flex flex-col pr-[1px]">
            <NavButton>单构件输入</NavButton>
            <NavButton>报表预览</NavButton>
          </div>
        </div>

        {/* editor */}
        <div className="flex min-w-0 flex-1 flex-col pl-[6px]">
          <div className="flex h-[26px] shrink-0 items-center bg-gradient-to-b from-white to-[#f1f1f1] pl-[4px]">
            <Tool w="w-[61px]" icon="newItem" label="新建" caret />
            <Tool w="w-[50px]" icon="del" label="删除" />
            <Tool w="w-[51px]" icon="dup" label="复制" />
            <Tool w="w-[62px]" icon="rename" label="重命名" />
            <Sep w="w-[3px]" />
            <div className="w-[31px] shrink-0 pt-px">楼层</div>
            <div className="flex h-[24px] w-[67px] shrink-0 items-center bg-white pl-[2px] pr-[10px] pt-px">
              <span>基础层</span>
              <span className="ml-auto flex items-center"><Caret /></span>
            </div>
            <Sep w="w-[5px]" />
            <Tool w="w-[59px]" icon="sort" label="排序" caret />
            <Tool w="w-[58px]" icon="filter" label="过滤" caret />
            <Sep w="w-[7px]" />
            <Tool w="w-[135px]" icon="copyFrom" label="从其他楼层复制构件" />
            <Tool w="w-[134px]" icon="copyFrom" label="复制构件到其他楼层" />
            <Sep w="w-[8px]" />
            <div className="flex w-[40px] shrink-0 items-center pt-px">查找<Caret /></div>
            <Sep w="w-[7px]" />
            <div className="w-[7px] shrink-0" />
            <Tool w="w-[51px]" icon="up" label="上移" gray />
            <Tool w="w-[60px]" icon="down" label="下移" />
          </div>

          <div className="flex min-h-0 flex-1">
            {/* component tree */}
            <div className="flex w-[182px] shrink-0 flex-col">
              <div className="flex h-[32px] shrink-0 items-center gap-[3px] bg-[#f8f8f8] pl-[1px]">
                <div className="flex h-[24px] w-[157px] items-center border border-[#888] bg-white pl-[2px] text-[13px] text-[#8a8a8a]">搜索构件...</div>
                <Search size={16} strokeWidth={3} className="text-[#3f9ae2]" />
              </div>
              <div className="h-[564px] border border-[#999] bg-white"><PileTree /></div>
            </div>

            {/* properties */}
            <div className="ml-[5px] flex min-w-0 flex-1 flex-col pt-[2px]">
              <div className="flex h-[21px] shrink-0">
                <div className="flex w-[63px] items-center justify-center border-x border-t border-[#dcdcdc] bg-white">属性编辑</div>
                <div className="flex-1 border-b border-[#dcdcdc] bg-[#f8f8f8]" />
              </div>
              <div className="h-[571px] border-b-2 border-l border-[#cfcfcf] bg-white"><PropGrid /></div>
            </div>
          </div>
        </div>
      </div>

      {/* status bar */}
      <div className={clsx("flex h-[20px] shrink-0 gap-[3px] border-b border-[#e6e6e6] bg-[#f0f0f0] text-[12.500px]", MONO)}>
        <div className="w-[148px] shrink-0 border border-[#dedede] bg-[#f8f8f8]" />
        <div className="flex w-[77px] shrink-0 items-center border border-[#dedede] bg-[#f8f8f8] pl-[1px]"><span><Mixed text="层高:2.15m" /></span></div>
        <div className="flex w-[1063px] shrink-0 items-center overflow-hidden whitespace-nowrap border border-[#dedede] bg-[#f8f8f8] pl-[1px]"><span><Mixed text="底标高:-2.15m" /></span></div>
        <div className="flex flex-1 items-center border border-[#dedede] bg-[#f8f8f8] pl-[1px]"><span><Mixed text="92.8 FPS" /></span></div>
      </div>

      <Taskbar />

      {/* windows sitting on top of the app */}
      <ParamDialog />
      <RedBox className="left-[436px] top-[330px] z-10 h-[169px] w-[152px]" />
      <RedBox className="left-[788px] top-[295px] z-10 h-[166px] w-[226px]" />
      <NetWidget />
      <SogouBar />
      <ScoreBubble />
    </div>
  );
}
